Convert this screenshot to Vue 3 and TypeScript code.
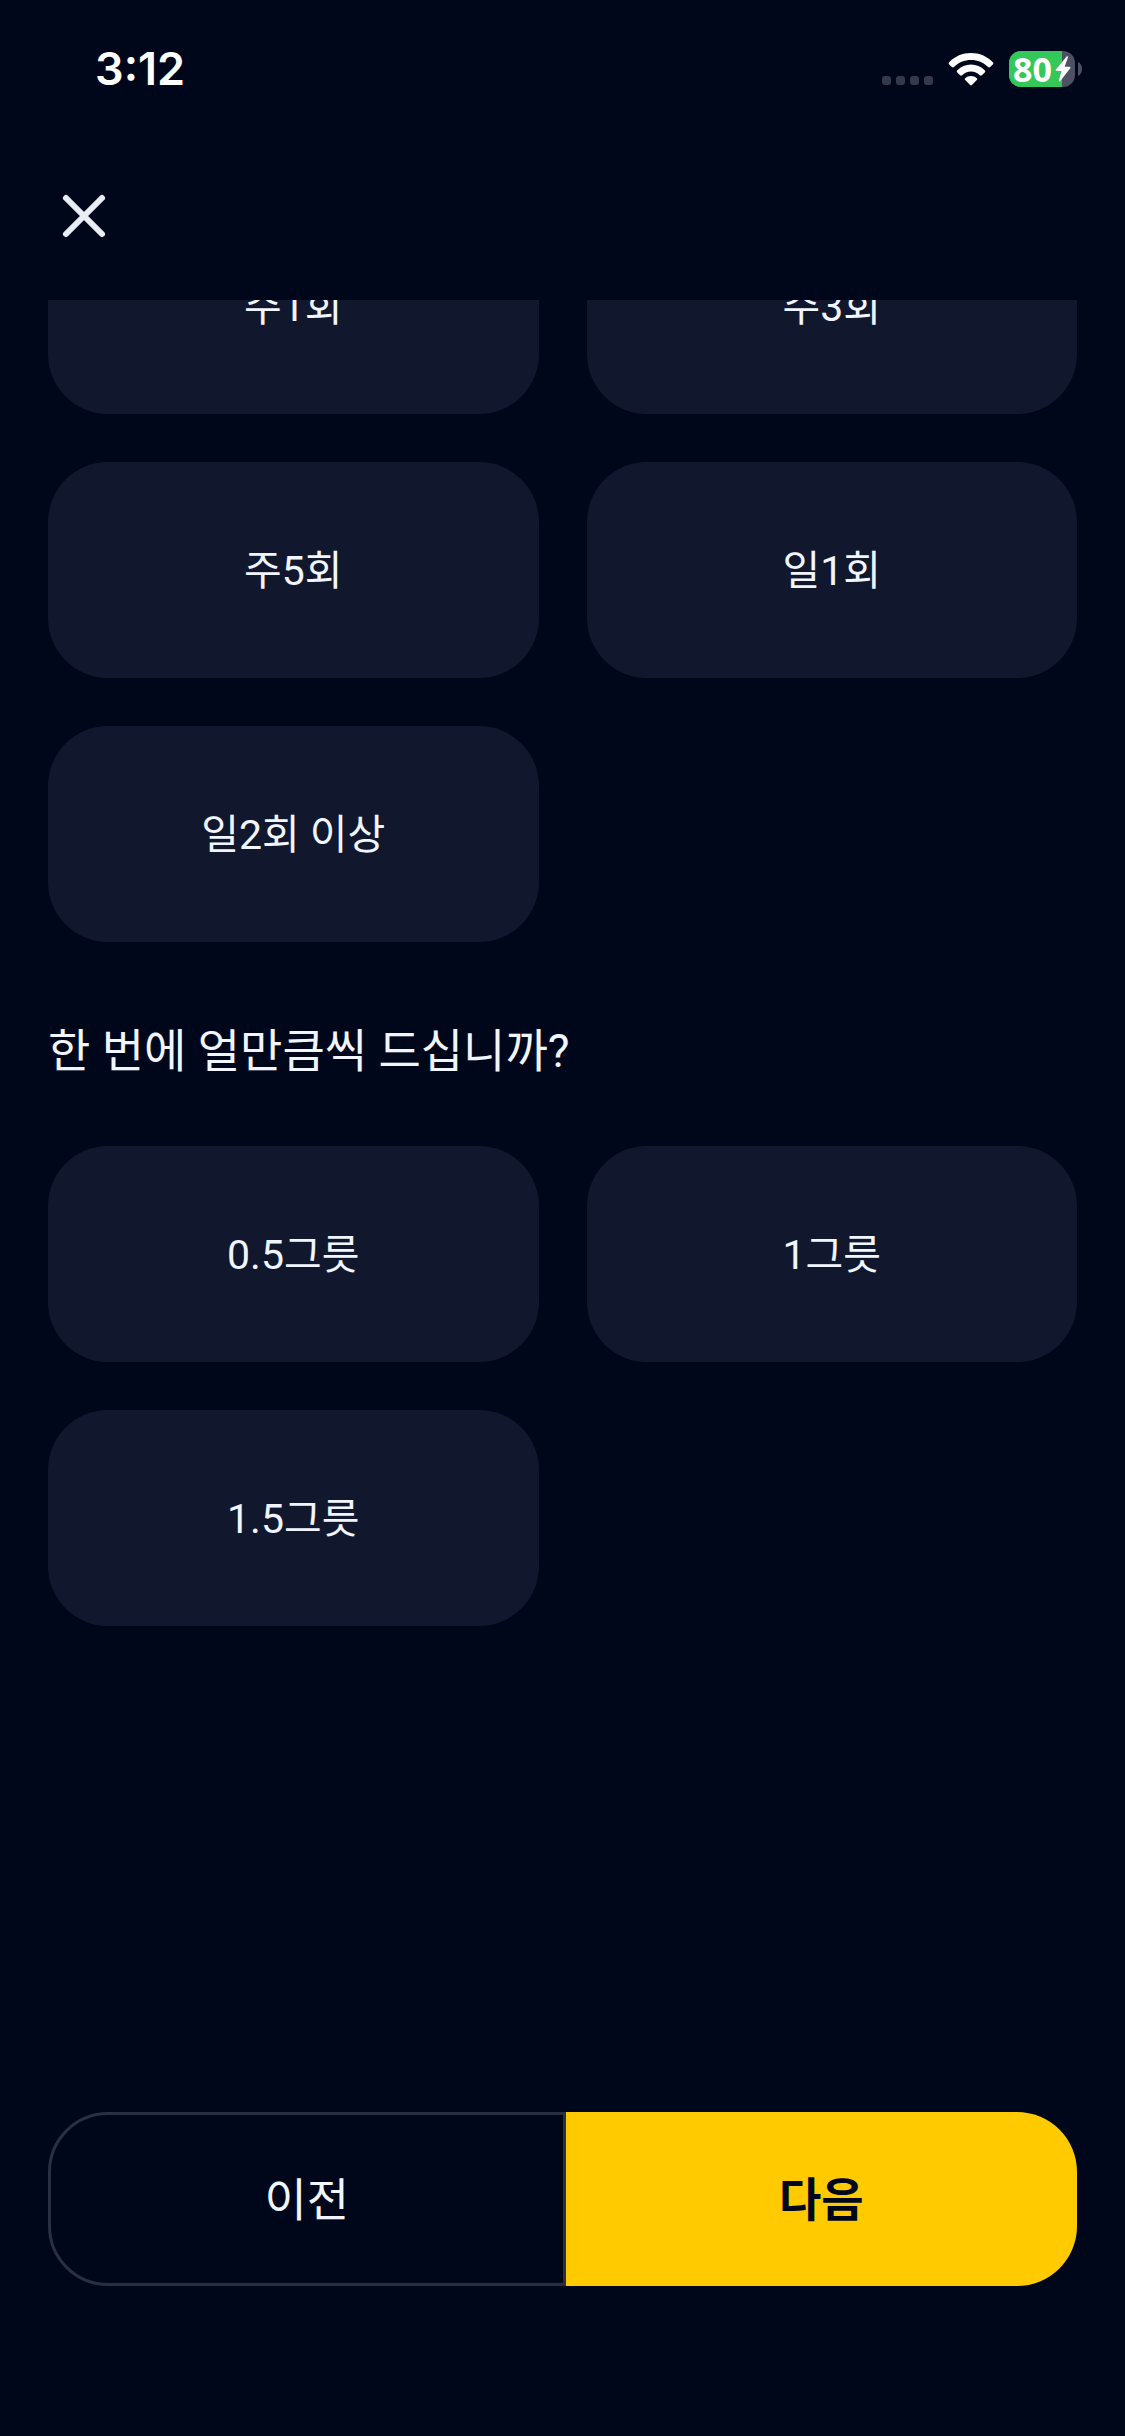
<script setup lang="ts">
import { ref } from 'vue'

const frequencies: string[] = ['주1회', '주3회', '주5회', '일1회', '일2회 이상']
const amounts: string[] = ['0.5그릇', '1그릇', '1.5그릇']

const frequency = ref<string | null>(null)
const amount = ref<string | null>(null)
const batteryLevel = 80
</script>

<template>
  <div class="screen">
    <header class="status-bar">
      <time class="clock">3:12</time>
      <div class="indicators">
        <div class="signal" aria-label="신호 없음">
          <span v-for="n in 4" :key="n" class="signal-dot"></span>
        </div>
        <svg class="wifi" viewBox="0 0 46 34" aria-hidden="true">
          <path d="M1.2 10.2C7 4.200 14.500 1 23 1s16 3.200 21.800 9.200c.7.700.7 1.500 0 2.200l-2.700 2.700c-.6.600-1.400.600-2 0C35.500 10.500 29.700 8 23 8S10.500 10.500 5.900 15.100c-.6.600-1.400.600-2 0l-2.700-2.700c-.7-.7-.7-1.500 0-2.200z" />
          <path d="M9.300 18.300C13 14.600 17.700 12.500 23 12.500s10 2.100 13.700 5.800c.7.700.7 1.500 0 2.200l-2.800 2.800c-.6.600-1.400.600-2 0C29.500 20.900 26.500 19.500 23 19.500s-6.500 1.400-8.900 3.800c-.6.600-1.400.600-2 0l-2.800-2.800c-.7-.7-.7-1.500 0-2.200z" />
          <path d="M17.200 26.200C18.800 24.700 20.800 23.900 23 23.900s4.200.8 5.800 2.300c.6.600.6 1.300 0 1.900l-4.900 4.900c-.6.600-1.200.600-1.800 0l-4.900-4.900c-.6-.6-.6-1.300 0-1.900z" />
        </svg>
        <div class="battery">
          <div class="battery-body">
            <div class="battery-fill" :style="{ width: batteryLevel + '%' }"></div>
            <span class="battery-level">{{ batteryLevel }}</span>
            <svg class="bolt" viewBox="0 0 16 26" aria-hidden="true">
              <path d="M11.500 .8 .9 13.600c-.5.700-.2 1.400.6 1.400h5.100L3.900 24.200c-.3 1.200.6 1.700 1.400.8L15.200 12.200c.5-.7.2-1.400-.6-1.400H9.700L12.900 1.600c.4-1.200-.6-1.700-1.400-.8z" />
            </svg>
          </div>
          <svg class="battery-cap" viewBox="0 0 4 14" aria-hidden="true">
            <path d="M0 0c2.500 1 4 3.800 4 7s-1.500 6-4 7z" />
          </svg>
        </div>
      </div>
    </header>

    <nav class="nav-bar">
      <button class="close" type="button" aria-label="닫기">
        <svg viewBox="0 0 72 72" aria-hidden="true">
          <path d="M18 18 54 54M54 18 18 54" />
        </svg>
      </button>
    </nav>

    <main class="viewport">
      <div class="questions">
        <section class="options">
          <button
            v-for="item in frequencies"
            :key="item"
            class="option"
            type="button"
            :aria-pressed="frequency === item"
            @click="frequency = item"
          >
            {{ item }}
          </button>
        </section>

        <h2 id="amount-title" class="question">한 번에 얼만큼씩 드십니까?</h2>
        <section class="options" aria-labelledby="amount-title">
          <button
            v-for="item in amounts"
            :key="item"
            class="option"
            type="button"
            :aria-pressed="amount === item"
            @click="amount = item"
          >
            {{ item }}
          </button>
        </section>
      </div>
    </main>

    <footer class="actions">
      <button class="action previous" type="button">이전</button>
      <button class="action next" type="button">다음</button>
    </footer>
  </div>
</template>

<style>
body {
  margin: 0;
  background: #00071b;
}
</style>

<style scoped>
.screen {
  display: flex;
  flex-direction: column;
  min-height: 100vh;
  background: #00071b;
  color: #f1f5fe;
  font-family: Roboto, 'Noto Sans CJK KR', sans-serif;
}

button {
  margin: 0;
  padding: 0;
  border: 0;
  background: none;
  color: inherit;
  font: inherit;
  cursor: pointer;
}

.status-bar {
  display: flex;
  align-items: center;
  justify-content: space-between;
  height: 138px;
  padding: 0 43px 0 95px;
}

.clock {
  color: #fff;
  font-family: Inter, sans-serif;
  font-size: 45px;
  font-weight: 600;
  line-height: 60px;
}

.indicators {
  display: flex;
  align-items: center;
  gap: 15px;
}

.signal {
  display: flex;
  align-self: flex-end;
  gap: 5px;
  padding-bottom: 2px;
}

.signal-dot {
  width: 9px;
  height: 9px;
  border-radius: 3px;
  background: #353a4a;
}

.wifi {
  width: 46px;
  height: 34px;
  fill: #fff;
}

.battery {
  display: flex;
  align-items: center;
  gap: 3px;
}

.battery-body {
  position: relative;
  display: flex;
  align-items: center;
  justify-content: center;
  gap: 3px;
  width: 66px;
  height: 36px;
  border-radius: 12px;
  background: #4d5163;
}

.battery-fill {
  position: absolute;
  inset: 0 auto 0 0;
  border-radius: 12px 0 0 12px;
  background: #34c759;
}

.battery-level {
  position: relative;
  color: #fff;
  font-family: 'Open Sans', sans-serif;
  font-size: 34px;
  font-weight: 700;
  line-height: 36px;
}

.bolt {
  position: relative;
  width: 16px;
  height: 26px;
  fill: #fff;
}

.battery-cap {
  width: 4px;
  height: 14px;
  fill: #4d5163;
}

.nav-bar {
  padding: 42px 48px 48px;
}

.close {
  display: block;
  width: 72px;
  height: 72px;
}

.close svg {
  display: block;
  fill: none;
  stroke: #e9edf5;
  stroke-width: 6;
  stroke-linecap: round;
}

.viewport {
  flex: 1;
  overflow: hidden;
}

/* The list rests scrolled part of the way through its first row. */
.questions {
  margin-top: -102px;
  padding: 0 48px 48px;
}

.options {
  display: grid;
  grid-template-columns: 1fr 1fr;
  gap: 48px;
}

.option {
  height: 216px;
  padding-top: 2px;
  border-radius: 60px;
  background: #11182e;
  font-size: 41px;
  line-height: 60px;
}

.question {
  margin: 79px 0 65px;
  font-size: 46px;
  font-weight: 400;
  line-height: 60px;
}

.actions {
  display: flex;
  padding: 0 48px 150px;
}

.action {
  flex: 1 1 0;
  height: 174px;
  padding-top: 2px;
  font-size: 46px;
  line-height: 60px;
}

.previous {
  border: 3px solid #293042;
  border-radius: 60px 0 0 60px;
}

.next {
  border-radius: 0 60px 60px 0;
  background: #ffca00;
  color: #00071b;
  font-weight: 700;
}
</style>
